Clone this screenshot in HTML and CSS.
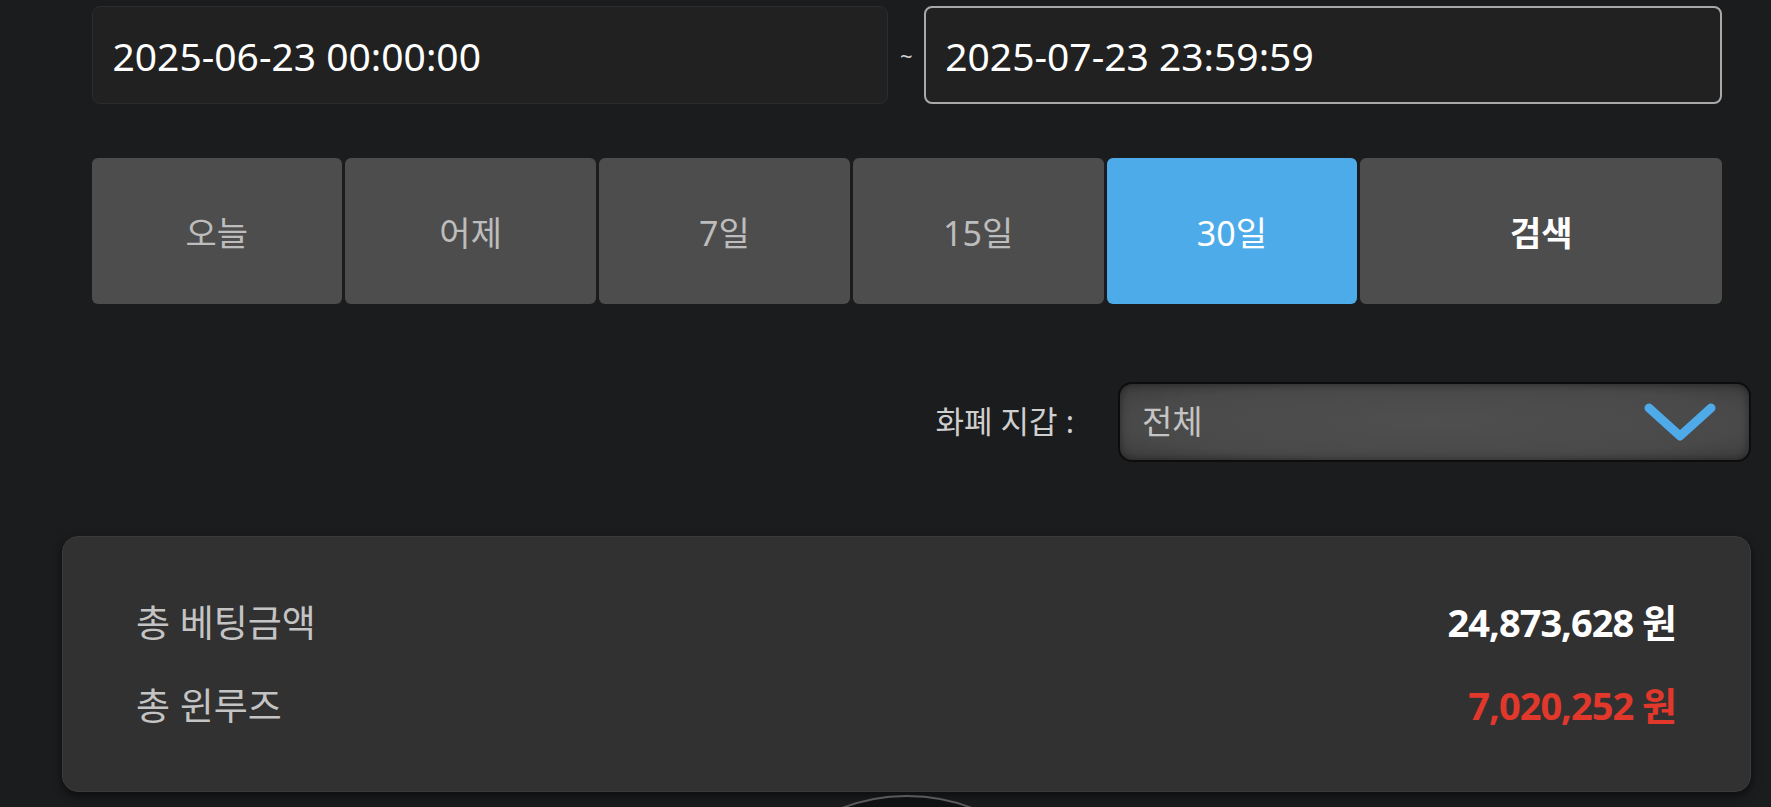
FILE: index.html
```html
<!DOCTYPE html>
<html lang="ko">
<head>
    <meta charset="UTF-8">
    <title>베팅 내역</title>
    <link rel="stylesheet" href="styles.css">
</head>
<body>
    <div class="page">
        <div class="dates">
            <input type="text" class="date-input" value="2025-06-23 00:00:00">
            <span class="tilde">~</span>
            <input type="text" class="date-input active" value="2025-07-23 23:59:59">
        </div>

        <div class="periods">
            <button type="button" class="period">오늘</button>
            <button type="button" class="period">어제</button>
            <button type="button" class="period">7일</button>
            <button type="button" class="period">15일</button>
            <button type="button" class="period selected">30일</button>
            <button type="button" class="period search">검색</button>
        </div>

        <div class="wallet-row">
            <label class="wallet-label">화폐 지갑 :</label>
            <div class="select">
                <span>전체</span>
                <svg class="chevron" width="74" height="40" viewBox="0 0 74 40">
                    <path d="M6 6 L37 34 L68 6" fill="none" stroke="#4eaae8" stroke-width="9" stroke-linecap="round" stroke-linejoin="round"/>
                </svg>
            </div>
        </div>

        <div class="summary">
            <div class="summary-row">
                <span class="summary-label">총 베팅금액</span>
                <span class="summary-value">24,873,628 원</span>
            </div>
            <div class="summary-row">
                <span class="summary-label">총 윈루즈</span>
                <span class="summary-value loss">7,020,252 원</span>
            </div>
        </div>

        <div class="round-btn"></div>
    </div>
</body>
</html>
```

FILE: styles.css
```css
html, body {
    margin: 0;
    padding: 0;
    background-color: #1b1c1e;
    overflow: hidden;
}

body {
    font-family: "Noto Sans", "Noto Sans CJK KR", sans-serif;
    color: #fff;
}

.page {
    padding: 0 20px 0 62px;
}

/* 날짜 입력 */
.dates {
    display: flex;
    align-items: center;
    margin: 6px 29px 0 29.5px;
}

.date-input {
    flex: 1;
    min-width: 0;
    height: 98px;
    box-sizing: border-box;
    padding: 0 20px;
    background-color: #212121;
    border: 1px solid #2c2c2c;
    border-radius: 8px;
    color: #fff;
    font-family: "Noto Sans", "Noto Sans CJK KR", sans-serif;
    font-size: 39px;
    outline: none;
}

.date-input.active {
    border: 2px solid #a9a9a9;
    padding-left: 19px;
}

.tilde {
    width: 36px;
    text-align: center;
    font-size: 22px;
    color: #d0d0d0;
}

/* 기간 버튼 */
.periods {
    display: grid;
    grid-template-columns: repeat(5, 251fr) 362fr;
    gap: 3px;
    height: 146px;
    margin: 54px 29px 0 29.5px;
}

.period {
    border: none;
    border-radius: 6px;
    background-color: #4d4d4d;
    color: #bdbdbd;
    font-family: "Noto Sans", "Noto Sans CJK KR", sans-serif;
    font-size: 34px;
    cursor: pointer;
}

.period.selected {
    background-color: #4eabe9;
    color: #fff;
}

.period.search {
    color: #fff;
    font-weight: bold;
}

/* 화폐 지갑 */
.wallet-row {
    display: flex;
    justify-content: flex-end;
    align-items: center;
    gap: 44px;
    margin-top: 78px;
}

.wallet-label {
    font-size: 31px;
    color: #cfcfcf;
    margin-top: -6px;
}

.select {
    width: 633px;
    height: 80px;
    box-sizing: border-box;
    display: flex;
    align-items: center;
    justify-content: space-between;
    padding: 0 32px 0 22px;
    border: 2px solid #0d0d0d;
    border-radius: 14px;
    background: radial-gradient(ellipse at center, #4f4f4f 0%, #494949 70%, #3c3c3c 100%);
    box-shadow: inset 0 0 8px rgba(0, 0, 0, 0.45);
    font-size: 33px;
    color: #c4c4c4;
}

.select span {
    margin-top: -4px;
}

.chevron {
    display: block;
}

/* 합계 카드 */
.summary {
    margin-top: 74px;
    padding: 42px 74px 46px 73px;
    background-color: #313131;
    border: 1px solid #3b3b3b;
    border-radius: 16px;
    box-shadow: 0 4px 10px rgba(0, 0, 0, 0.55);
}

.summary-row {
    display: flex;
    justify-content: space-between;
    align-items: center;
    height: 83px;
}

.summary-label {
    font-size: 37px;
    color: #c4c4c4;
}

.summary-value {
    font-size: 38px;
    font-weight: bold;
    letter-spacing: -1px;
    color: #fff;
}

.summary-value.loss {
    color: #e2382b;
}

.round-btn {
    width: 370px;
    height: 370px;
    margin: 3px auto 0;
    border-radius: 50%;
    border: 2px solid #5a5a5a;
    background-color: #101113;
}
```
